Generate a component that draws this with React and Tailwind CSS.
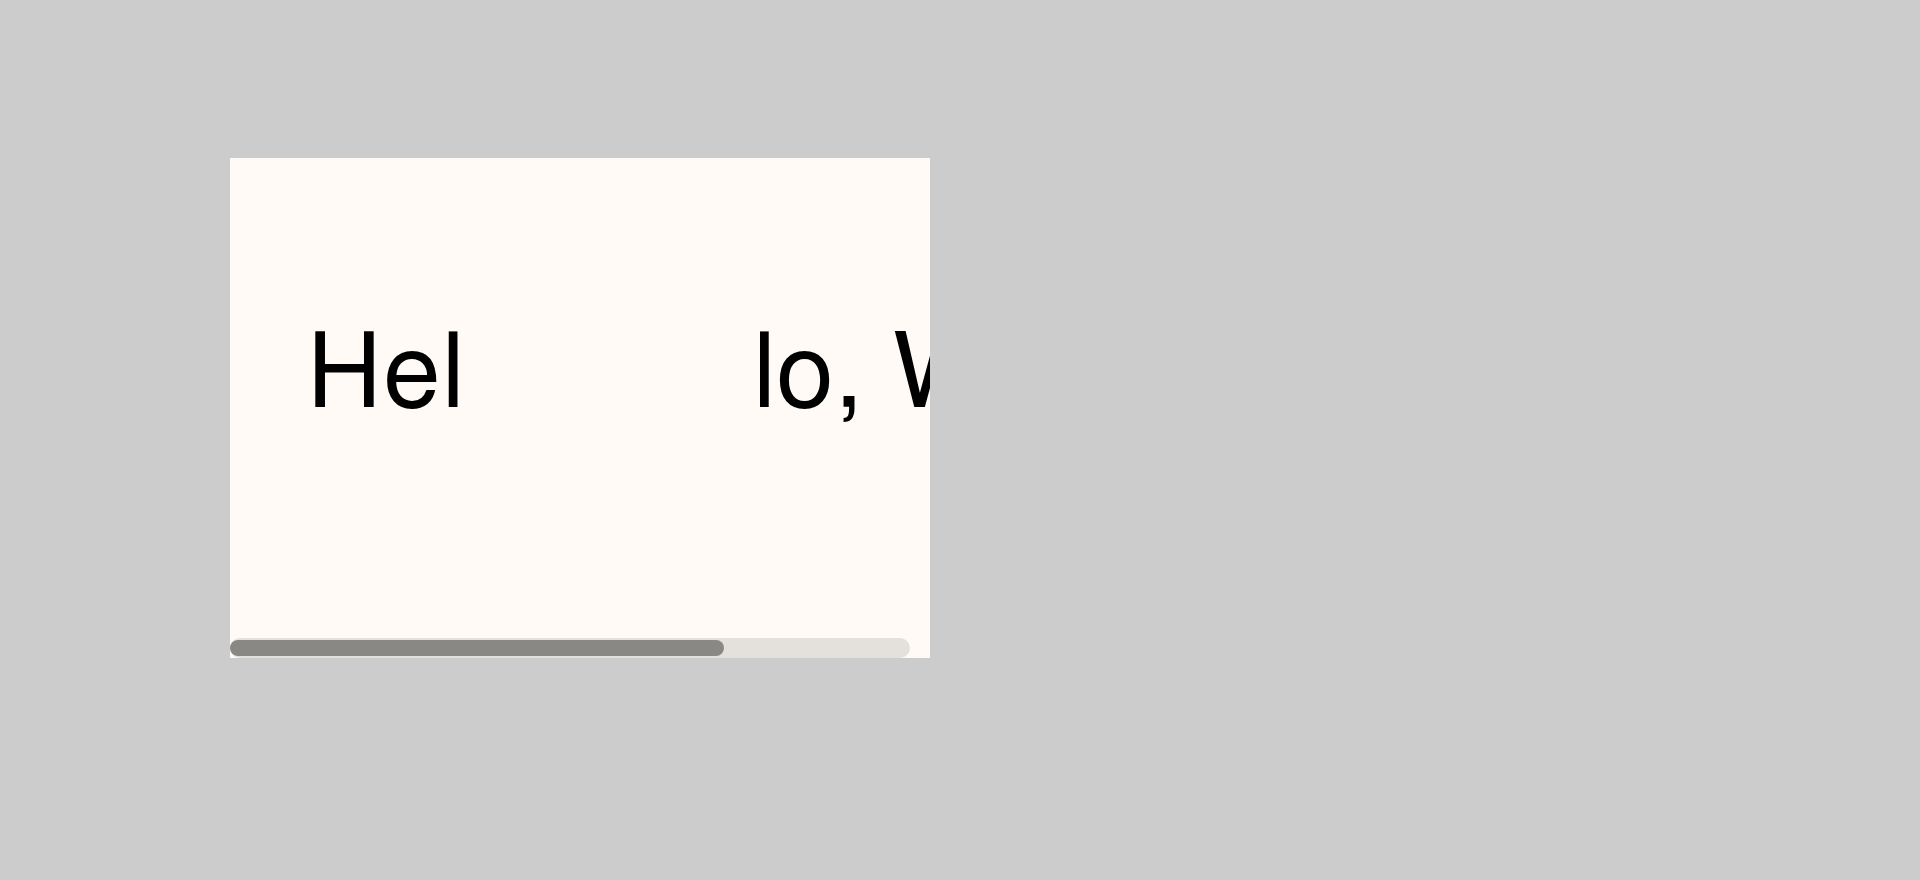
import React from 'react';

export default function App() {
  return (
    <div className="min-h-screen w-full bg-[#cccccc] pt-[158px] pl-[230px]">
      <div className="w-[700px] h-[500px] bg-[#fffaf5] overflow-hidden flex flex-col">
        {/* scrolling line of text */}
        <div className="flex-1 pt-[166px] pl-[77px] whitespace-nowrap text-[104px] leading-none text-black font-['FreeSans','Liberation_Sans',Arial,sans-serif]">
          <span className="tracking-[3px]">He</span>l<span className="inline-block w-[289px]" />
          <span className="tracking-[2px]">lo, </span>World
        </div>

        {/* horizontal scrollbar */}
        <div className="h-5 w-[680px] rounded-full bg-[#e4e1dc] flex items-center">
          <div className="h-4 w-[494px] rounded-full bg-[#898884]" />
        </div>
      </div>
    </div>
  );
}
